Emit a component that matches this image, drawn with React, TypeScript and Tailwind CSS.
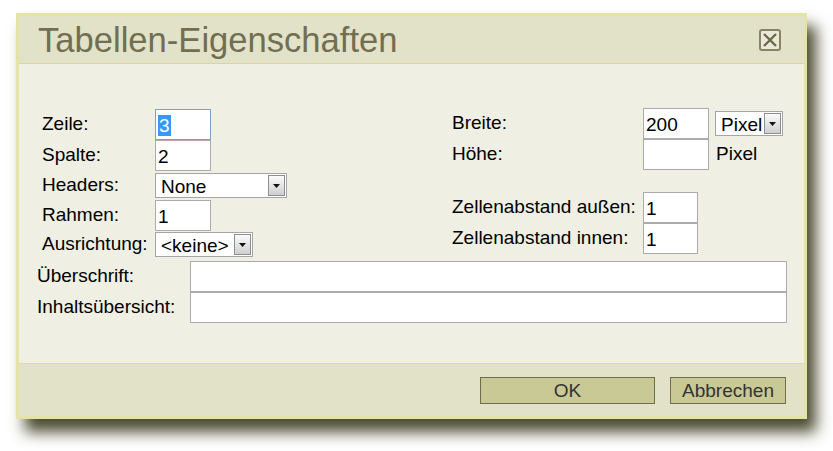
import React from "react";

const font = "font-['Liberation_Sans',Arial,sans-serif]";

function Box({ w, h, children, focused }: { w: string; h: string; children?: React.ReactNode; focused?: boolean }) {
  return (
    <div
      className={`${w} ${h} bg-white border ${focused ? "border-[#7d9fd6]" : "border-[#ababab]"} flex items-center pl-[2px] pt-[1px] text-black leading-none shrink-0`}
    >
      {children}
    </div>
  );
}

function Select({ w, h, value }: { w: string; h: string; value: string }) {
  return (
    <div className={`${w} ${h} bg-white border border-[#a5a5a5] flex items-center justify-between shrink-0`}>
      <span className="pl-[5px] pt-[1px] text-black leading-none">{value}</span>
      <div className="w-[17px] h-[calc(100%-2px)] mr-[1px] border border-[#8e8e8e] bg-gradient-to-b from-[#fbfbfb] to-[#cfcfcf] flex items-center justify-center">
        <svg width="7" height="4" viewBox="0 0 7 4">
          <path d="M0 0 L7 0 L3.5 4 Z" fill="#111" />
        </svg>
      </div>
    </div>
  );
}

export default function App() {
  return (
    <div className={`min-h-screen bg-white ${font} text-[19px]`}>
      <div className="pt-[13px] pl-[16px]">
        <div className="w-[791px] h-[406px] border-[3px] border-[#e4e4a8] bg-[#efefe3] flex flex-col shadow-[9px_13px_14px_rgba(50,50,20,0.88)]">
          {/* Title bar */}
          <div className="h-[48px] bg-[#e2e2c9] border-b border-[#d8d89c] flex items-center justify-between pl-[19px] pr-[23px] shrink-0">
            <span className="text-[34.6px] text-[#716e52] leading-none pt-[1px]">Tabellen-Eigenschaften</span>
            <svg width="22" height="22" viewBox="0 0 22 22">
              <rect x="1" y="1" width="20" height="20" rx="2" fill="#e9e9d6" stroke="#85846a" strokeWidth="2" />
              <path d="M5 5 L17 17 M17 5 L5 17" stroke="#6a694f" strokeWidth="2.4" />
            </svg>
          </div>

          {/* Body */}
          <div className="flex-1 flex flex-col pt-[44px]">
            <div className="flex">
              {/* Left column */}
              <div className="w-[433px] pl-[23px] mt-[1px] flex flex-col">
                <div className="flex items-center h-[31px]">
                  <span className="w-[113px]">Zeile:</span>
                  <Box w="w-[56px]" h="h-[31px]" focused>
                    <span className="bg-[#3399ff] text-white px-[1px] leading-[21px]">3</span>
                  </Box>
                </div>
                <div className="flex items-center h-[31px]">
                  <span className="w-[113px]">Spalte:</span>
                  <Box w="w-[56px]" h="h-[31px]">2</Box>
                </div>
                <div className="flex items-center h-[29px]">
                  <span className="w-[113px]">Headers:</span>
                  <Select w="w-[132px]" h="h-[25px]" value="None" />
                </div>
                <div className="flex items-center h-[31px]">
                  <span className="w-[113px]">Rahmen:</span>
                  <Box w="w-[56px]" h="h-[31px]">1</Box>
                </div>
                <div className="flex items-center h-[27px]">
                  <span className="w-[113px]">Ausrichtung:</span>
                  <Select w="w-[98px]" h="h-[25px]" value="<keine>" />
                </div>
              </div>

              {/* Right column */}
              <div className="flex flex-col">
                <div className="flex items-center h-[31px]">
                  <span className="w-[191px]">Breite:</span>
                  <Box w="w-[66px]" h="h-[31px]">200</Box>
                  <div className="ml-[6px]">
                    <Select w="w-[68px]" h="h-[25px]" value="Pixel" />
                  </div>
                </div>
                <div className="flex items-center h-[31px]">
                  <span className="w-[191px]">Höhe:</span>
                  <Box w="w-[66px]" h="h-[31px]" />
                  <span className="ml-[7px]">Pixel</span>
                </div>
                <div className="h-[22px]" />
                <div className="flex items-center h-[31px]">
                  <span className="w-[191px]">Zellenabstand außen:</span>
                  <Box w="w-[55px]" h="h-[31px]">1</Box>
                </div>
                <div className="flex items-center h-[31px]">
                  <span className="w-[191px]">Zellenabstand innen:</span>
                  <Box w="w-[55px]" h="h-[31px]">1</Box>
                </div>
              </div>
            </div>

            <div className="flex flex-col pl-[18px] mt-[3px]">
              <div className="flex items-center h-[31px]">
                <span className="w-[153px]">Überschrift:</span>
                <Box w="w-[597px]" h="h-[31px]" />
              </div>
              <div className="flex items-center h-[31px]">
                <span className="w-[153px]">Inhaltsübersicht:</span>
                <Box w="w-[597px]" h="h-[31px]" />
              </div>
            </div>
          </div>

          {/* Footer */}
          <div className="h-[53px] bg-[#e2e2c9] border-t border-[#dcdca0] flex items-center justify-end gap-[15px] pr-[18px] shrink-0">
            <div className="w-[175px] h-[27px] bg-[#c9c995] border border-[#6e6d4e] flex items-center justify-center text-[#333] leading-none pt-[1px]">
              OK
            </div>
            <div className="w-[116px] h-[27px] bg-[#c9c995] border border-[#6e6d4e] flex items-center justify-center text-[#333] leading-none pt-[1px]">
              Abbrechen
            </div>
          </div>
        </div>
      </div>
    </div>
  );
}
